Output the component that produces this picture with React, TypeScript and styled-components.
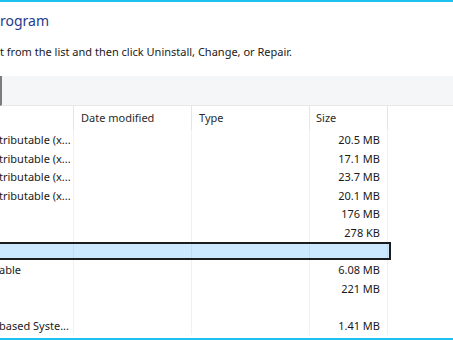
import styled, { createGlobalStyle, css } from "styled-components";

const GlobalStyle = createGlobalStyle`
  html, body {
    margin: 0;
    padding: 0;
    background: #ffffff;
    overflow: hidden;
  }
`;

type iProgram = {
  name: string;
  size: string;
  isSelected?: boolean;
};

const programs: iProgram[] = [
  { name: "tributable (x...", size: "20.5 MB" },
  { name: "tributable (x...", size: "17.1 MB" },
  { name: "tributable (x...", size: "23.7 MB" },
  { name: "tributable (x...", size: "20.1 MB" },
  { name: "", size: "176 MB" },
  { name: "", size: "278 KB" },
  { name: "", size: "", isSelected: true },
  { name: "able", size: "6.08 MB" },
  { name: "", size: "221 MB" },
  { name: "", size: "" },
  { name: "based Syste...", size: "1.41 MB" }
];

const Window = styled.div`
  width: 453px;
  height: 340px;
  box-sizing: border-box;
  border-top: 2px solid #1dc1ee;
  border-bottom: 2px solid #1dc1ee;
  display: flex;
  flex-direction: column;
  overflow: hidden;
  font-family: "Noto Sans", "Open Sans", sans-serif;
  color: #1a1a1a;
`;

const Title = styled.div`
  margin-top: 9px;
  height: 20px;
  line-height: 20px;
  font-size: 14px;
  color: #1e3a8a;
  white-space: nowrap;
`;

const Subtitle = styled.div`
  margin-top: 13px;
  height: 16px;
  line-height: 16px;
  font-size: 11px;
  white-space: nowrap;
`;

const Toolbar = styled.div`
  margin-top: 16px;
  height: 30px;
  box-sizing: border-box;
  background: #f5f6f7;
  border-bottom: 1px solid #e6e8ea;
  border-left: 2px solid #7c7c7c;
`;

const ListView = styled.div`
  flex: 1;
  display: flex;
  flex-direction: column;
  font-size: 11px;
`;

const Row = styled.div<{ $isHeader?: boolean; $isSelected?: boolean }>`
  display: flex;
  width: 391px;
  box-sizing: border-box;
  height: ${props => (props.$isHeader ? "24px" : "18.6px")};
  line-height: ${props => (props.$isHeader ? "23px" : "19px")};
  ${props =>
    props.$isHeader &&
    css`
      color: #2b2b2b;
    `}
  ${props =>
    props.$isSelected &&
    css`
      background: #cce8ff;
      border: 2px solid #1c1c1c;
      border-left: none;
    `}
`;

const Cell = styled.div<{
  $width: number;
  $align?: "left" | "right";
  $isHeader?: boolean;
}>`
  width: ${props => props.$width}px;
  flex-shrink: 0;
  box-sizing: border-box;
  overflow: hidden;
  white-space: nowrap;
  text-align: ${props => props.$align || "left"};
  padding: ${props => (props.$align === "right" ? "0 7px 0 0" : "0 0 0 7px")};
  border-right: 1px solid
    ${props => (props.$isHeader ? "#e5e5e5" : "rgba(0, 0, 0, 0.055)")};
`;

const NameCell = styled(Cell)`
  padding: 0;
  text-indent: -1px;
`;

const SizeHeaderCell = styled(Cell)`
  padding-left: 6px;
`;

const columns = { name: 74, date: 118, type: 118, size: 78 };

const App = () => {
  return (
    <>
      <GlobalStyle />
      <Window>
        <Title>rogram</Title>
        <Subtitle>
          t from the list and then click Uninstall, Change, or Repair.
        </Subtitle>
        <Toolbar />
        <ListView>
          <Row $isHeader>
            <NameCell $width={columns.name} $isHeader />
            <Cell $width={columns.date} $isHeader>
              Date modified
            </Cell>
            <Cell $width={columns.type} $isHeader>
              Type
            </Cell>
            <SizeHeaderCell $width={columns.size} $isHeader>
              Size
            </SizeHeaderCell>
          </Row>
          {programs.map((program, index) => (
            <Row key={index} $isSelected={program.isSelected}>
              <NameCell $width={columns.name}>{program.name}</NameCell>
              <Cell $width={columns.date} />
              <Cell $width={columns.type} />
              <Cell $width={columns.size} $align={"right"}>
                {program.size}
              </Cell>
            </Row>
          ))}
        </ListView>
      </Window>
    </>
  );
};

export default App;
